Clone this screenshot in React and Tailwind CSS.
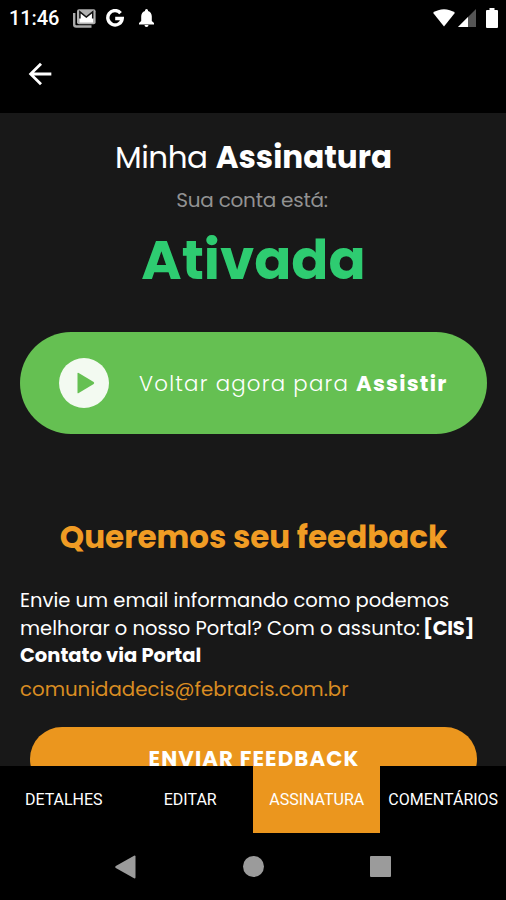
import { MdArrowBack } from 'react-icons/md';

const TABS = [
  { id: 'detalhes', label: 'DETALHES' },
  { id: 'editar', label: 'EDITAR' },
  { id: 'assinatura', label: 'ASSINATURA' },
  { id: 'comentarios', label: 'COMENTÁRIOS' },
];

function StatusBar() {
  return (
    <div className="flex h-9 shrink-0 items-center pl-[9px] pr-2 text-white">
      <span className="w-[64px] whitespace-nowrap font-['Roboto',sans-serif] text-[20px] font-medium leading-9 tracking-[-0.1px]">11:46</span>
      <svg className="h-[19px] w-[23px]" viewBox="0 0 23 19" fill="none">
        <path d="M1.2 4v11.5a2 2 0 0 0 2 2H18.500" stroke="#aaa" strokeWidth="2.4" />
        <rect x="4" y="0.3" width="18.6" height="14.9" rx="2" fill="#b0b0b0" />
        <path d="M6.600 13.500V3l6.700 5L20 3v10.500z" fill="#fff" />
        <path d="M6.900 9.500V2.800l6.400 5.200 6.400-5.200v6.700" stroke="#111" strokeWidth="1.5" />
      </svg>
      <svg className="ml-[10px] h-[19px] w-[18px]" viewBox="0 0 18 19" fill="none">
        <path d="M14.6 4.2A7.2 7.2 0 1 0 16.2 9.5H9.2" stroke="#fff" strokeWidth="3.4" />
      </svg>
      <svg className="ml-[15px] h-[18px] w-[15px]" viewBox="0.5 0 15 18" fill="#fff">
        <path d="M8 0a1.5 1.5 0 0 1 1.5 1.5v.5C12 2.7 13.300 5 13.300 7.500V12l2.200 2v1.400H.5V14l2.200-2V7.500C2.700 5 4 2.700 6.500 2v-.5A1.500 1.500 0 0 1 8 0zM6 16h4a2 2 0 0 1-4 0z" />
      </svg>
      <div className="ml-auto flex items-center">
        <svg className="h-[18px] w-[22px]" viewBox="0 0 22 18" fill="#fff">
          <path d="M0 3.8C6.5-1 15.5-1 22 3.8L11 17.5z" />
        </svg>
        <svg className="ml-[3px] h-[18px] w-[18px]" viewBox="0 0 18 18">
          <path d="M18 0v18H0z" fill="#555" />
          <path d="M10 8v10H0z" fill="#fff" />
        </svg>
        <svg className="ml-[10px] h-[20px] w-[12px]" viewBox="0 0 12 20" fill="#fff">
          <path d="M3.5 0h5v2H11a1 1 0 0 1 1 1v16a1 1 0 0 1-1 1H1a1 1 0 0 1-1-1V3a1 1 0 0 1 1-1h2.5z" />
        </svg>
      </div>
    </div>
  );
}

function SystemNav() {
  return (
    <div className="flex h-[67px] shrink-0 items-center bg-black pl-[115px]">
      <svg className="h-[24px] w-[21px]" viewBox="0 0 21 24" fill="#9b9b9b">
        <path d="M19.5.5q1 0 1 1v21q0 1-1 1L.8 13q-1.2-1 0-2z" />
      </svg>
      <div className="ml-[107px] size-[21px] rounded-full bg-[#9b9b9b]" />
      <div className="ml-[106px] size-[21px] rounded-[1px] bg-[#9b9b9b]" />
    </div>
  );
}

export default function App() {
  return (
    <div className="flex h-[900px] w-[506px] flex-col overflow-hidden bg-black font-['Poppins','Inter',sans-serif]">
      <StatusBar />
      <header className="flex h-[77px] shrink-0 items-center pb-[2px] pl-[23px]">
        <button className="text-white">
          <MdArrowBack size={34} />
        </button>
      </header>

      <main className="flex h-[653px] shrink-0 flex-col overflow-hidden bg-[#181818] px-5 pt-6">
        <h1 className="h-10 whitespace-nowrap pl-px text-center text-[31px] leading-10 text-white">
          <span className="tracking-[-0.5px]">Minha</span> <strong className="font-bold">Assinatura</strong>
        </h1>
        <p className="mt-[11px] h-6 whitespace-nowrap pr-[2px] text-center text-[20px] leading-6 tracking-[-0.25px] text-[#929292]">Sua conta está:</p>
        <p className="mt-4 h-16 whitespace-nowrap pl-px text-center text-[54.7px] font-bold leading-16 text-[#2ecc71]">Ativada</p>

        <button className="mt-[40px] flex h-[102px] w-[467px] shrink-0 items-center rounded-full bg-[#65c052] pl-[39px] text-white">
          <svg className="size-[50px] shrink-0" viewBox="0 0 50 50">
            <circle cx="25" cy="25" r="25" fill="#f3faf1" />
            <path d="M18.5 15.5v19q0 1.3 1.2.6l15-9.2q1-.9 0-1.8l-15-9.2q-1.2-.7-1.2.6z" fill="#65c052" />
          </svg>
          <span className="ml-[30px] whitespace-nowrap pt-px text-[21.3px] font-light tracking-[1.22px]">
            Voltar agora para <strong className="font-bold">Assistir</strong>
          </span>
        </button>

        <h2 className="mt-[83px] h-10 shrink-0 whitespace-nowrap pl-px text-center text-[31px] font-bold leading-10 text-[#f09c24]">Queremos seu feedback</h2>
        <p className="mt-[30px] shrink-0 whitespace-nowrap text-[19.5px] leading-[27.7px] text-white">
          Envie um email informando como podemos<br />
          melhorar o nosso Portal? Com o assunto: <strong className="-ml-[2px] font-bold tracking-[-0.3px]">[CIS]</strong><br />
          <strong className="font-bold">Contato via Portal</strong>
        </p>
        <a className="mt-[5px] h-7 shrink-0 whitespace-nowrap text-[19.75px] leading-7 text-[#d98c22]">comunidadecis@febracis.com.br</a>
        <button className="ml-[10px] mt-[24px] flex h-16 w-[447px] shrink-0 items-center justify-center whitespace-nowrap rounded-full bg-[#eb961e] pl-px text-[21.3px] font-bold tracking-[1.1px] text-white">
          ENVIAR FEEDBACK
        </button>
      </main>

      <nav className="grid h-[67px] shrink-0 grid-cols-4 font-['Roboto',sans-serif] text-[16px] text-white">
        {TABS.map((tab) => (
          <button
            key={tab.id}
            className={tab.id === 'assinatura' ? 'whitespace-nowrap bg-[#eb961e] pl-px' : 'whitespace-nowrap bg-black pl-px'}
          >
            {tab.label}
          </button>
        ))}
      </nav>
      <SystemNav />
    </div>
  );
}
